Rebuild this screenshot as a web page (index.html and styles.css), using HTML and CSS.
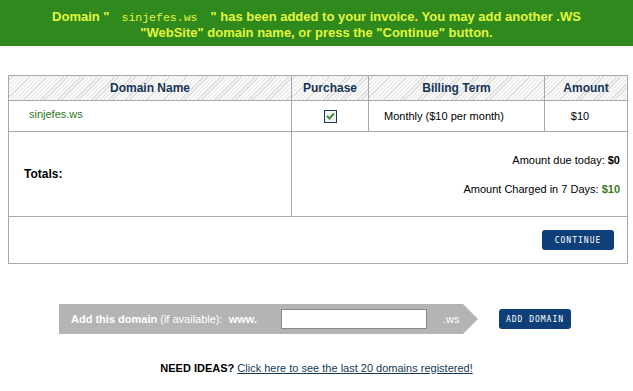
FILE: index.html
```html
<!DOCTYPE html>
<html lang="en">
<head>
    <meta charset="UTF-8">
    <title>Domain Added</title>
    <link rel="stylesheet" href="styles.css">
</head>
<body>

    <div class="notice">
        <p>Domain "<span class="notice-domain">sinjefes.ws</span>" has been added to your invoice. You may add another .WS<br>"WebSite" domain name, or press the "Continue" button.</p>
    </div>

    <table class="invoice">
        <colgroup>
            <col class="col-name">
            <col class="col-buy">
            <col class="col-term">
            <col class="col-amount">
        </colgroup>
        <thead>
            <tr>
                <th>Domain Name</th>
                <th>Purchase</th>
                <th>Billing Term</th>
                <th>Amount</th>
            </tr>
        </thead>
        <tbody>
            <tr class="item-row">
                <td class="domain-cell"><a href="#" class="domain-link">sinjefes.ws</a></td>
                <td class="center"><span class="check-box"><svg width="9" height="8" viewBox="0 0 9 8"><path d="M1 4 L3.5 6.5 L8 1.5" fill="none" stroke="#4c8a3c" stroke-width="2"/></svg></span></td>
                <td class="term-cell">Monthly ($10 per month)</td>
                <td class="amount-cell">$10</td>
            </tr>
            <tr class="totals-row">
                <td class="totals-label">Totals:</td>
                <td colspan="3" class="totals-values">
                    <p>Amount due today: <b>$0</b></p>
                    <p>Amount Charged in 7 Days: <b class="green">$10</b></p>
                </td>
            </tr>
            <tr class="action-row">
                <td colspan="4"><button class="btn">CONTINUE</button></td>
            </tr>
        </tbody>
    </table>

    <div class="add-row">
        <form class="add-bar" action="" autocomplete="off">
            <label for="domain"><b>Add this domain</b> (if available):&nbsp; <b>www.</b></label>
            <input type="text" name="domain" id="domain">
            <span class="tld">.ws</span>
        </form>
        <button class="btn">ADD DOMAIN</button>
    </div>

    <p class="ideas"><b>NEED IDEAS?</b> <a href="#">Click here to see the last 20 domains registered!</a></p>

</body>
</html>
```

FILE: styles.css
```css
*{
    box-sizing: border-box;
}

body{
    margin: 0;
    font-family: "Liberation Sans", Arial, sans-serif;
    font-size: 11px;
    color: #000;
    background: #fff;
}

p{
    margin: 0;
}

.notice{
    background-color: #2f891d;
    height: 46px;
    padding-top: 3px;
    display: flex;
    align-items: center;
    justify-content: center;
}

.notice p{
    color: #e2f63c;
    font-size: 13px;
    font-weight: bold;
    line-height: 15px;
    text-align: center;
}

.notice-domain{
    font-family: "Liberation Mono", monospace;
    font-size: 11.5px;
    font-weight: normal;
    padding: 0 13px 0 12px;
}

.invoice{
    margin: 29px 0 0 8px;
    width: 619px;
    border-collapse: collapse;
    table-layout: fixed;
}

.col-name{ width: 283px; }
.col-buy{ width: 77px; }
.col-term{ width: 176px; }
.col-amount{ width: 83px; }

.invoice th,
.invoice td{
    border: 1px solid #a8a8a8;
    padding: 0;
}

.invoice th{
    height: 25px;
    font-size: 12px;
    color: #173456;
    background: repeating-linear-gradient(135deg, #fff 0, #fff 2px, #d4d4d4 2px, #d4d4d4 3px);
}

.item-row td{
    height: 31px;
    font-size: 11px;
}

.center{
    text-align: center;
}

.term-cell{
    padding-left: 15px !important;
}

.amount-cell{
    text-align: center;
    padding-right: 12px !important;
}

.domain-cell{
    padding-left: 20px !important;
    vertical-align: top;
    padding-top: 7px !important;
}

.domain-link{
    color: #2b7a1c;
    text-decoration: none;
}

.check-box{
    display: inline-flex;
    align-items: center;
    justify-content: center;
    width: 13px;
    height: 13px;
    border: 1px solid #1d3a52;
    background: #eef3f6;
    vertical-align: middle;
}

.totals-row td{
    height: 85px;
}

.totals-label{
    padding-left: 15px !important;
    font-weight: bold;
    font-size: 12px;
}

.totals-values{
    text-align: right;
    padding-right: 7px !important;
    font-size: 11px;
}

.totals-values p{
    margin: 17px 0;
}

.green{
    color: #3c7a24;
}

.action-row td{
    height: 47px;
    text-align: right;
    padding-right: 13px !important;
}

.btn{
    background: #0e3f78;
    color: #fff;
    border: none;
    border-radius: 3px;
    height: 20px;
    width: 72px;
    padding: 0;
    font-family: "DejaVu Sans Mono", monospace;
    font-size: 8px;
    letter-spacing: 1px;
    cursor: pointer;
}

.add-row{
    display: flex;
    justify-content: center;
    align-items: center;
    gap: 21px;
    margin-top: 40px;
    padding-right: 3px;
}

.add-bar{
    display: flex;
    align-items: center;
    width: 419px;
    height: 30px;
    padding-left: 12px;
    background: #b4b4b4;
    color: #fff;
    font-size: 11px;
    clip-path: polygon(0 0, calc(100% - 15px) 0, 100% 50%, calc(100% - 15px) 100%, 0 100%);
}

.add-bar label{
    width: 210px;
}

.add-bar input{
    width: 146px;
    height: 20px;
    border: 1px solid #8a8a8a;
    background: #fff;
    margin: 0;
}

.tld{
    margin-left: 16px;
}

.ideas{
    margin-top: 28px;
    text-align: center;
    font-size: 11px;
}

.ideas a{
    color: #163a58;
}
```
